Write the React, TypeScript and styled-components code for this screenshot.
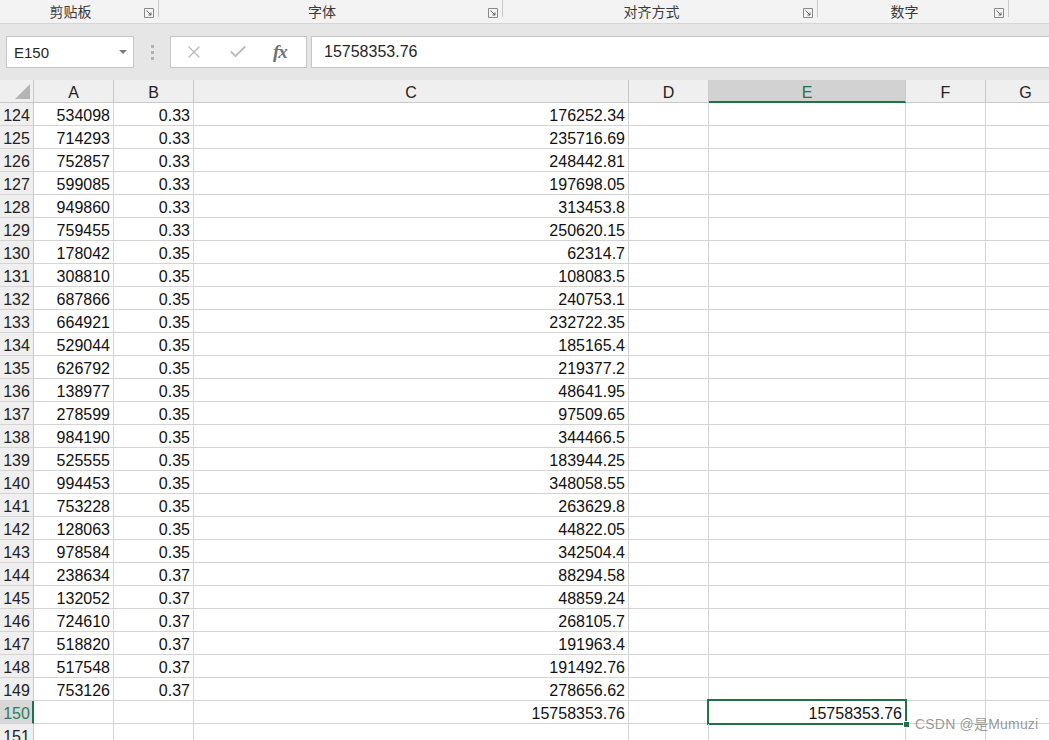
import React from 'react';
import styled, { createGlobalStyle } from 'styled-components';
import { X, Check } from 'lucide-react';

const GlobalStyle = createGlobalStyle`
  html, body {
    margin: 0;
    padding: 0;
    background: #ffffff;
    overflow: hidden;
  }
  body {
    font-family: "Liberation Sans", "Noto Sans CJK SC", sans-serif;
  }
`;

const Page = styled.div`
  position: relative;
  width: 1049px;
  height: 740px;
  overflow: hidden;
  background: #ffffff;
`;

/* ---------- ribbon group labels ---------- */

const Ribbon = styled.div`
  display: flex;
  height: 23px;
  background: #f3f3f3;
  border-bottom: 1px solid #d6d6d6;
`;

const Group = styled.div<{ $width: number }>`
  position: relative;
  display: flex;
  align-items: center;
  width: ${p => p.$width}px;
  flex-shrink: 0;
  &::after {
    content: '';
    position: absolute;
    right: 0;
    top: 0;
    height: 17px;
    width: 1px;
    background: #c9c9c9;
  }
`;

const GroupLabel = styled.span`
  flex: 1;
  text-align: center;
  padding-left: 2px;
  font-family: "Noto Sans CJK SC", sans-serif;
  font-size: 14px;
  color: #3a3a3a;
  line-height: 23px;
`;

const Launcher = styled.span`
  display: flex;
  width: 20px;
  justify-content: center;
  padding-top: 2px;
`;

const LauncherIcon = () => (
  <svg width="10" height="10" viewBox="0 0 10 10">
    <path d="M0.5 0.5 H9.5 V9.5 H0.5 Z" fill="none" stroke="#8a8a8a" strokeWidth="1" />
    <path d="M2.5 2.5 L7 7 M7 4.5 V7 H4.5" fill="none" stroke="#5e5e5e" strokeWidth="1" />
  </svg>
);

/* ---------- formula bar ---------- */

const FormulaArea = styled.div`
  display: flex;
  align-items: stretch;
  background: #e6e6e6;
  padding: 12px 0 12px 6px;
  height: 32px;
`;

const NameBox = styled.div`
  display: flex;
  align-items: center;
  justify-content: space-between;
  width: 128px;
  box-sizing: border-box;
  background: #ffffff;
  border: 1px solid #c6c6c6;
  padding: 0 6px 0 7px;
  font-size: 15px;
  color: #262626;
`;

const DropArrow = styled.span`
  width: 0;
  height: 0;
  border-left: 4px solid transparent;
  border-right: 4px solid transparent;
  border-top: 4px solid #7a7a7a;
`;

const Grip = styled.div`
  display: flex;
  flex-direction: column;
  justify-content: center;
  gap: 3px;
  width: 36px;
  align-items: center;
`;

const GripDot = styled.span`
  width: 3px;
  height: 3px;
  background: #b3b3b3;
`;

const FxBox = styled.div`
  display: flex;
  align-items: center;
  width: 137px;
  box-sizing: border-box;
  background: #ffffff;
  border: 1px solid #c6c6c6;
  padding-left: 13px;
  gap: 24px;
  color: #bcbcbc;
`;

const FxText = styled.span`
  font-family: "Liberation Serif", serif;
  font-style: italic;
  font-weight: bold;
  font-size: 19px;
  color: #707070;
  letter-spacing: -1px;
  margin-left: 1px;
`;

const FormulaInput = styled.div`
  flex: 1;
  margin-left: 4px;
  display: flex;
  align-items: center;
  background: #ffffff;
  border-top: 1px solid #c6c6c6;
  border-bottom: 1px solid #c6c6c6;
  border-left: 1px solid #c6c6c6;
  padding-left: 12px;
  font-size: 16px;
  color: #262626;
`;

/* ---------- sheet ---------- */

const Sheet = styled.div`
  display: grid;
  grid-template-columns: 34px 80px 80px 435px 80px 197px 80px 80px;
  grid-auto-rows: 23px;
`;

const CornerCell = styled.div`
  display: flex;
  align-items: flex-end;
  justify-content: flex-end;
  box-sizing: border-box;
  background: #efefef;
  border-right: 1px solid #c9c9c9;
  border-bottom: 1px solid #c9c9c9;
  padding: 0 3px 3px 0;
`;

const ColHeader = styled.div<{ $active?: boolean }>`
  box-sizing: border-box;
  background: ${p => (p.$active ? '#d2d2d2' : '#efefef')};
  border-right: 1px solid #c9c9c9;
  border-bottom: ${p => (p.$active ? '2px solid #217346' : '1px solid #c9c9c9')};
  color: ${p => (p.$active ? '#217346' : '#222222')};
  font-size: 16px;
  text-align: center;
  line-height: 22px;
  padding-top: 2px;
`;

const RowHeader = styled.div<{ $active?: boolean }>`
  box-sizing: border-box;
  background: ${p => (p.$active ? '#d8d8d8' : '#efefef')};
  border-right: ${p => (p.$active ? '2px solid #217346' : '1px solid #c9c9c9')};
  border-bottom: 1px solid #d4d4d4;
  color: ${p => (p.$active ? '#2e7d5b' : '#222222')};
  font-size: 16px;
  text-align: center;
  line-height: 22px;
  padding-top: 2px;
  padding-left: ${p => (p.$active ? '1px' : '0')};
`;

const Cell = styled.div<{ $selected?: boolean }>`
  position: relative;
  box-sizing: border-box;
  border-right: 1px solid #d4d4d4;
  border-bottom: 1px solid #d4d4d4;
  font-size: 16px;
  color: #111111;
  text-align: right;
  padding-right: 3px;
  padding-top: 2px;
  line-height: 22px;
  white-space: nowrap;
  ${p =>
    p.$selected &&
    `
    &::after {
      content: '';
      position: absolute;
      left: -2px;
      top: -2px;
      right: -2px;
      bottom: -2px;
      border: 2px solid #217346;
      pointer-events: none;
    }
    &::before {
      content: '';
      position: absolute;
      right: -5px;
      bottom: -5px;
      width: 5px;
      height: 5px;
      background: #217346;
      border: 1px solid #ffffff;
      z-index: 2;
    }
  `}
`;

const Watermark = styled.div`
  position: absolute;
  left: 915px;
  top: 713px;
  font-family: "Liberation Sans", "Noto Sans CJK SC", sans-serif;
  font-size: 14px;
  color: rgba(120, 120, 120, 0.75);
  letter-spacing: 0.2px;
`;

const groups = [
  { label: '剪贴板', width: 159 },
  { label: '字体', width: 344 },
  { label: '对齐方式', width: 315 },
  { label: '数字', width: 191 },
];

const columns = ['A', 'B', 'C', 'D', 'E', 'F', 'G'];

type Row = [number, string, string, string];

const rows: Row[] = [
  [124, '534098', '0.33', '176252.34'],
  [125, '714293', '0.33', '235716.69'],
  [126, '752857', '0.33', '248442.81'],
  [127, '599085', '0.33', '197698.05'],
  [128, '949860', '0.33', '313453.8'],
  [129, '759455', '0.33', '250620.15'],
  [130, '178042', '0.35', '62314.7'],
  [131, '308810', '0.35', '108083.5'],
  [132, '687866', '0.35', '240753.1'],
  [133, '664921', '0.35', '232722.35'],
  [134, '529044', '0.35', '185165.4'],
  [135, '626792', '0.35', '219377.2'],
  [136, '138977', '0.35', '48641.95'],
  [137, '278599', '0.35', '97509.65'],
  [138, '984190', '0.35', '344466.5'],
  [139, '525555', '0.35', '183944.25'],
  [140, '994453', '0.35', '348058.55'],
  [141, '753228', '0.35', '263629.8'],
  [142, '128063', '0.35', '44822.05'],
  [143, '978584', '0.35', '342504.4'],
  [144, '238634', '0.37', '88294.58'],
  [145, '132052', '0.37', '48859.24'],
  [146, '724610', '0.37', '268105.7'],
  [147, '518820', '0.37', '191963.4'],
  [148, '517548', '0.37', '191492.76'],
  [149, '753126', '0.37', '278656.62'],
  [150, '', '', '15758353.76'],
  [151, '', '', ''],
];

const App: React.FC = () => {
  return (
    <Page>
      <GlobalStyle />
      <Ribbon>
        {groups.map(g => (
          <Group key={g.label} $width={g.width}>
            <GroupLabel>{g.label}</GroupLabel>
            <Launcher>
              <LauncherIcon />
            </Launcher>
          </Group>
        ))}
      </Ribbon>

      <FormulaArea>
        <NameBox>
          <span>E150</span>
          <DropArrow />
        </NameBox>
        <Grip>
          <GripDot />
          <GripDot />
          <GripDot />
        </Grip>
        <FxBox>
          <X size={20} strokeWidth={1.6} />
          <Check size={20} strokeWidth={2.4} />
          <FxText>fx</FxText>
        </FxBox>
        <FormulaInput>15758353.76</FormulaInput>
      </FormulaArea>

      <Sheet>
        <CornerCell>
          <svg width="15" height="15" viewBox="0 0 15 15">
            <path d="M15 0 L15 15 L0 15 Z" fill="#b4b4b4" />
          </svg>
        </CornerCell>
        {columns.map(c => (
          <ColHeader key={c} $active={c === 'E'}>
            {c}
          </ColHeader>
        ))}

        {rows.map(([n, a, b, c]) => {
          const active = n === 150;
          return (
            <React.Fragment key={n}>
              <RowHeader $active={active}>{n}</RowHeader>
              <Cell>{a}</Cell>
              <Cell>{b}</Cell>
              <Cell>{c}</Cell>
              <Cell />
              <Cell $selected={active}>{active ? '15758353.76' : ''}</Cell>
              <Cell />
              <Cell />
            </React.Fragment>
          );
        })}
      </Sheet>

      <Watermark>CSDN @是Mumuzi</Watermark>
    </Page>
  );
};

export default App;
